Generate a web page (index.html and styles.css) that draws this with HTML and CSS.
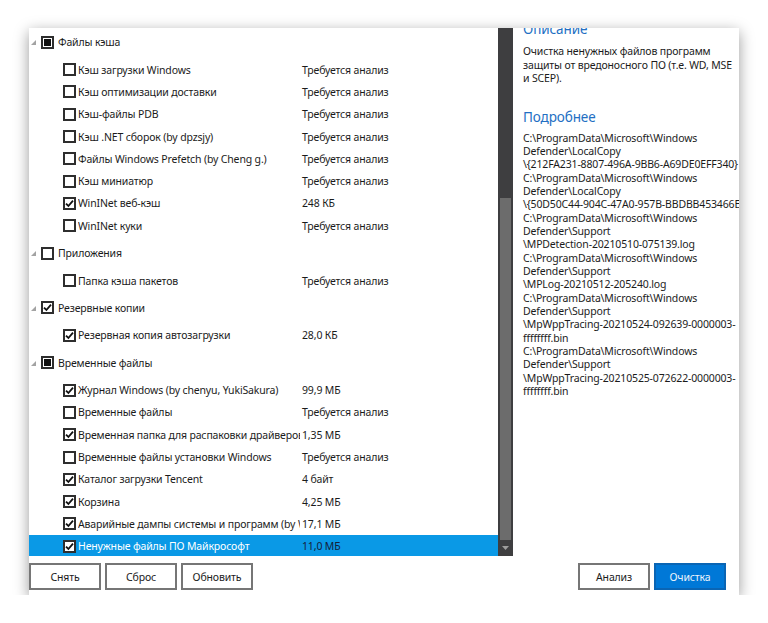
FILE: index.html
```html
<!DOCTYPE html>
<html lang="ru">
<head>
<meta charset="utf-8">
<link rel="stylesheet" href="styles.css">
</head>
<body>
<div class="window">
  <div class="main">
    <div class="list">
      <div class="tree">
        <div class="row group"><span class="exp"><svg viewBox="0 0 5 5" width="5" height="5"><polygon points="0,5 5,5 5,0"/></svg></span><span class="cb ind"><i></i></span><span class="name">Файлы кэша</span></div>
        <div class="row item"><span class="cb"></span><span class="name">Кэш загрузки Windows</span><span class="val">Требуется анализ</span></div>
        <div class="row item"><span class="cb"></span><span class="name">Кэш оптимизации доставки</span><span class="val">Требуется анализ</span></div>
        <div class="row item"><span class="cb"></span><span class="name">Кэш-файлы PDB</span><span class="val">Требуется анализ</span></div>
        <div class="row item"><span class="cb"></span><span class="name">Кэш .NET сборок (by dpzsjy)</span><span class="val">Требуется анализ</span></div>
        <div class="row item"><span class="cb"></span><span class="name">Файлы Windows Prefetch (by Cheng g.)</span><span class="val">Требуется анализ</span></div>
        <div class="row item"><span class="cb"></span><span class="name">Кэш миниатюр</span><span class="val">Требуется анализ</span></div>
        <div class="row item"><span class="cb on"><svg viewBox="0 0 9 9" width="9" height="9"><path d="M1 4.6 L3.4 7 L8 1.6"/></svg></span><span class="name">WinINet веб-кэш</span><span class="val">248 КБ</span></div>
        <div class="row item"><span class="cb"></span><span class="name">WinINet куки</span><span class="val">Требуется анализ</span></div>

        <div class="row group"><span class="exp"><svg viewBox="0 0 5 5" width="5" height="5"><polygon points="0,5 5,5 5,0"/></svg></span><span class="cb"></span><span class="name">Приложения</span></div>
        <div class="row item"><span class="cb"></span><span class="name">Папка кэша пакетов</span><span class="val">Требуется анализ</span></div>

        <div class="row group"><span class="exp"><svg viewBox="0 0 5 5" width="5" height="5"><polygon points="0,5 5,5 5,0"/></svg></span><span class="cb on"><svg viewBox="0 0 9 9" width="9" height="9"><path d="M1 4.6 L3.4 7 L8 1.6"/></svg></span><span class="name">Резервные копии</span></div>
        <div class="row item"><span class="cb on"><svg viewBox="0 0 9 9" width="9" height="9"><path d="M1 4.6 L3.4 7 L8 1.6"/></svg></span><span class="name">Резервная копия автозагрузки</span><span class="val">28,0 КБ</span></div>

        <div class="row group"><span class="exp"><svg viewBox="0 0 5 5" width="5" height="5"><polygon points="0,5 5,5 5,0"/></svg></span><span class="cb ind"><i></i></span><span class="name">Временные файлы</span></div>
        <div class="row item"><span class="cb on"><svg viewBox="0 0 9 9" width="9" height="9"><path d="M1 4.6 L3.4 7 L8 1.6"/></svg></span><span class="name">Журнал Windows (by chenyu, YukiSakura)</span><span class="val">99,9 МБ</span></div>
        <div class="row item"><span class="cb"></span><span class="name">Временные файлы</span><span class="val">Требуется анализ</span></div>
        <div class="row item"><span class="cb on"><svg viewBox="0 0 9 9" width="9" height="9"><path d="M1 4.6 L3.4 7 L8 1.6"/></svg></span><span class="name">Временная папка для распаковки драйверов</span><span class="val">1,35 МБ</span></div>
        <div class="row item"><span class="cb"></span><span class="name">Временные файлы установки Windows</span><span class="val">Требуется анализ</span></div>
        <div class="row item"><span class="cb on"><svg viewBox="0 0 9 9" width="9" height="9"><path d="M1 4.6 L3.4 7 L8 1.6"/></svg></span><span class="name">Каталог загрузки Tencent</span><span class="val">4 байт</span></div>
        <div class="row item"><span class="cb on"><svg viewBox="0 0 9 9" width="9" height="9"><path d="M1 4.6 L3.4 7 L8 1.6"/></svg></span><span class="name">Корзина</span><span class="val">4,25 МБ</span></div>
        <div class="row item"><span class="cb on"><svg viewBox="0 0 9 9" width="9" height="9"><path d="M1 4.6 L3.4 7 L8 1.6"/></svg></span><span class="name">Аварийные дампы системы и программ (by Windows)</span><span class="val">17,1 МБ</span></div>
        <div class="row item selected"><span class="cb on"><svg viewBox="0 0 9 9" width="9" height="9"><path d="M1 4.6 L3.4 7 L8 1.6"/></svg></span><span class="name">Ненужные файлы ПО Майкрософт</span><span class="val">11,0 МБ</span></div>
      </div>
    </div>
    <div class="scrollbar">
      <div class="thumb"></div>
      <div class="arrow"><svg viewBox="0 0 7 4" width="7" height="4"><polygon points="0,0 7,0 3.5,4"/></svg></div>
    </div>
    <div class="details">
      <div class="details-inner">
        <h3 class="head first">Описание</h3>
        <p class="desc">Очистка ненужных файлов программ<br>защиты от вредоносного ПО (т.е. WD, MSE<br>и SCEP).</p>
        <h3 class="head">Подробнее</h3>
        <p class="paths">C:\ProgramData\Microsoft\Windows<br>Defender\LocalCopy<br>\{212FA231-8807-496A-9BB6-A69DE0EFF340}<br>C:\ProgramData\Microsoft\Windows<br>Defender\LocalCopy<br>\{50D50C44-904C-47A0-957B-BBDBB453466E}<br>C:\ProgramData\Microsoft\Windows<br>Defender\Support<br>\MPDetection-20210510-075139.log<br>C:\ProgramData\Microsoft\Windows<br>Defender\Support<br>\MPLog-20210512-205240.log<br>C:\ProgramData\Microsoft\Windows<br>Defender\Support<br>\MpWppTracing-20210524-092639-0000003-<br>ffffffff.bin<br>C:\ProgramData\Microsoft\Windows<br>Defender\Support<br>\MpWppTracing-20210525-072622-0000003-<br>ffffffff.bin</p>
      </div>
    </div>
  </div>
  <div class="footer">
    <div class="btns">
      <button class="btn">Снять</button>
      <button class="btn">Сброс</button>
      <button class="btn">Обновить</button>
    </div>
    <div class="btns">
      <button class="btn">Анализ</button>
      <button class="btn primary">Очистка</button>
    </div>
  </div>
</div>
</body>
</html>
```

FILE: styles.css
```css
html, body {
  margin: 0;
  padding: 0;
  background: #ffffff;
}
body {
  padding: 28px 0 0 29px;
  font-family: "Noto Sans", "Open Sans", sans-serif;
  font-size: 10.5px;
  letter-spacing: -0.15px;
  color: #1b1b1b;
}
.window {
  width: 710px;
  height: 567px;
  background: #ffffff;
  box-shadow: 0 4px 14px rgba(0, 0, 0, 0.4);
  display: flex;
  flex-direction: column;
}
.main {
  display: flex;
  height: 528px;
}
.list {
  width: 469px;
  height: 528px;
  overflow: hidden;
}
.tree {
  margin-top: -2px;
}
.row {
  display: flex;
  align-items: center;
  white-space: nowrap;
}
.group {
  height: 32.5px;
  padding-left: 2px;
}
.item {
  height: 22.3px;
  padding-left: 34px;
}
.exp {
  width: 5px;
  height: 5px;
  display: flex;
  margin-top: 1px;
}
.exp svg {
  fill: #a3a3a3;
}
.cb {
  width: 13px;
  height: 13px;
  box-sizing: border-box;
  border: 2px solid #2e2e2e;
  background: #ffffff;
  display: flex;
  align-items: center;
  justify-content: center;
  flex: 0 0 13px;
}
.group .cb {
  margin-left: 5px;
}
.cb svg path {
  fill: none;
  stroke: #111111;
  stroke-width: 1.8;
}
.cb.ind i {
  width: 7px;
  height: 7px;
  background: #111111;
}
.name {
  margin-left: 2px;
}
.group .name {
  margin-left: 4px;
}
.item .name {
  width: 222px;
  overflow: hidden;
  flex: 0 0 222px;
}
.val {
  margin-left: 2px;
}
.selected {
  background: #0a99e6;
}
.selected .name {
  color: #ffffff;
}
.selected .val {
  color: #14213a;
}
.scrollbar {
  width: 15px;
  height: 528px;
  background: #3e3e40;
  display: flex;
  flex-direction: column;
  box-sizing: border-box;
  padding-top: 170px;
}
.thumb {
  flex: 1;
  margin: 0 2px;
  background: #6c6c6c;
}
.arrow {
  height: 16px;
  display: flex;
  align-items: center;
  justify-content: center;
}
.arrow svg {
  fill: #9d9d9d;
}
.details {
  width: 226px;
  height: 528px;
  overflow: hidden;
  padding-left: 10px;
  box-sizing: border-box;
}
.details-inner {
  width: 240px;
  white-space: nowrap;
}
.head {
  margin: 21px 0 5px 0;
  font-size: 13.5px;
  letter-spacing: -0.1px;
  line-height: 20px;
  font-weight: normal;
  color: #236fc3;
}
.head.first {
  margin-top: -9px;
  margin-bottom: 6px;
}
.desc {
  margin: 0;
  line-height: 13.6px;
}
.paths {
  margin: 0;
  line-height: 13.33px;
}
.footer {
  flex: 1;
  display: flex;
  justify-content: space-between;
  padding: 7px 13px 0 0;
}
.btns {
  display: flex;
  gap: 4px;
  align-items: flex-start;
}
.btn {
  width: 72px;
  height: 27px;
  box-sizing: border-box;
  border: 2px solid #767676;
  background: #ffffff;
  font-family: "Noto Sans", "Open Sans", sans-serif;
  font-size: 10.5px;
  letter-spacing: -0.15px;
  color: #1b1b1b;
  padding: 0;
}
.btn.primary {
  background: #0078d7;
  border-color: #0a65b4;
  color: #eef5fc;
}
```
